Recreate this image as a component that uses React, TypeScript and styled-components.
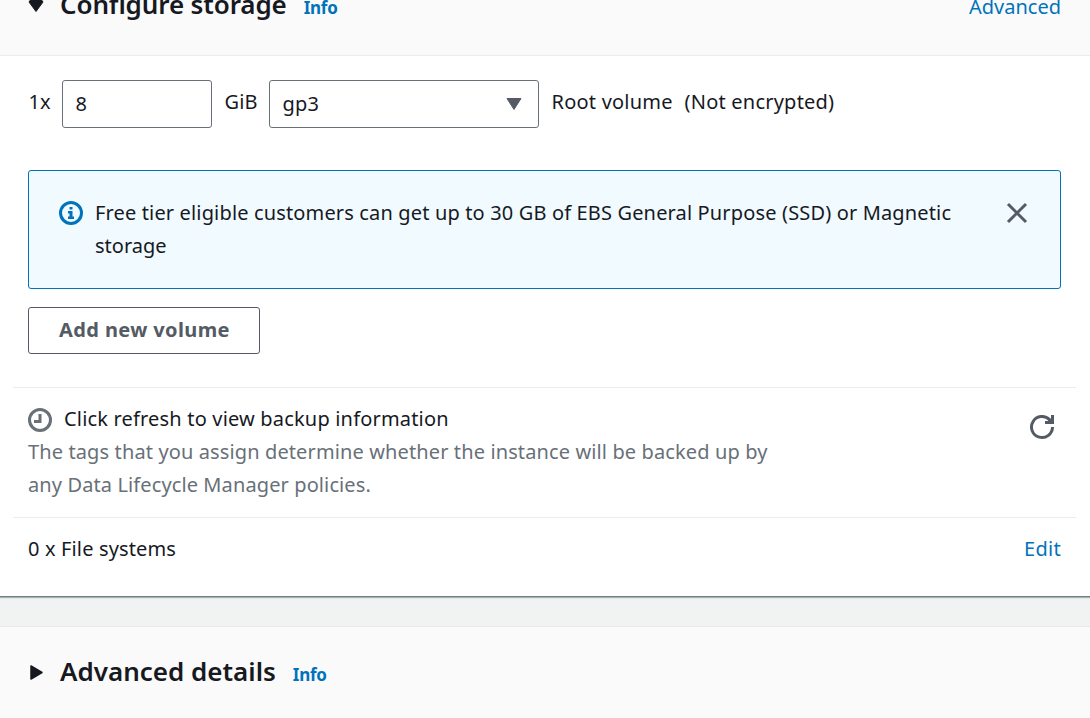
import React from "react";
import styled, { createGlobalStyle } from "styled-components";

const GlobalStyle = createGlobalStyle`
  *, *::before, *::after { box-sizing: border-box; }
  html, body { margin: 0; padding: 0; background: #f2f3f3; }
  body { overflow: hidden; }
`;

const Page = styled.main`
  height: 718px;
  overflow: hidden;
  display: flex;
  flex-direction: column;
  background: #f1f3f3;
  color: #16191f;
  font-family: "Noto Sans", "Open Sans", sans-serif;
  font-size: 20px;
  line-height: 33px;
  letter-spacing: 0.145px;
`;

const Panel = styled.section<{ $clipped?: boolean }>`
  flex: none;
  margin-top: ${(p) => (p.$clipped ? "-38px" : "0")};
  background: #fff;
  border-top: 1px solid #e6eaea;
  border-bottom: 1px solid #6f7f80;
  box-shadow: 0 1px 1px rgba(0, 28, 36, 0.3);
  & + & { margin-top: 29px; }
`;

const PanelHeader = styled.header<{ $raised?: boolean }>`
  height: 93px;
  padding: 0 29px ${(p) => (p.$raised ? 9 : 3)}px 28px;
  display: flex;
  align-items: center;
  background: #fafafa;
  border-bottom: 1px solid #eaeded;
`;

const Caret = styled.svg`
  flex: none;
  width: 16px;
  height: 18px;
  margin: 2px 16px 0 0;
`;

const Title = styled.h2<{ $spacing: number }>`
  margin: -2px 0 0;
  font-size: 26px;
  font-weight: 600;
  line-height: 36px;
  letter-spacing: ${(p) => p.$spacing}px;
`;

const InfoLink = styled.a`
  margin: 6px auto 0 17px;
  color: #0073bb;
  font-size: 17px;
  font-weight: 700;
  line-height: 24px;
  letter-spacing: -0.25px;
`;

const Text = styled.span<{ $spacing?: number }>`
  white-space: nowrap;
  letter-spacing: ${(p) => p.$spacing ?? 0.145}px;
`;

const Link = styled.a<{ $spacing?: number }>`
  color: #0073bb;
  letter-spacing: ${(p) => p.$spacing ?? 0}px;
`;

const HeaderLink = styled(Link)`
  margin-top: 4px;
`;

const Content = styled.div`
  padding: 24px 29px 33px 28px;
`;

const VolumeRow = styled.div`
  display: flex;
  height: 48px;
  align-items: center;
`;

const RowLabel = styled(Text)<{ $width: number; $indent: number }>`
  flex: none;
  width: ${(p) => p.$width}px;
  padding-left: ${(p) => p.$indent}px;
  margin-top: -6px;
`;

const Field = styled.div<{ $width: number }>`
  flex: none;
  width: ${(p) => p.$width}px;
  height: 48px;
  padding: 0 16px 0 12.5px;
  display: flex;
  align-items: center;
  justify-content: space-between;
  border: 1px solid #687078;
  border-radius: 3px;
  background: #fff;
`;

const FieldValue = styled(Text)`
  margin-top: -2px;
`;

const SelectArrow = styled.svg`
  display: block;
  width: 16px;
  height: 14px;
`;

const Alert = styled.div`
  height: 119px;
  margin-top: 42px;
  padding: 25px 31px 0 30px;
  display: flex;
  align-items: flex-start;
  border: 1px solid #0073bb;
  border-radius: 3px;
  background: #f1faff;
`;

const AlertText = styled.div`
  flex: 1;
  display: flex;
  flex-direction: column;
  margin-left: 12px;
`;

const Icon = styled.svg`
  flex: none;
  display: block;
  width: 24px;
  height: 24px;
  fill: none;
`;

const AlertIcon = styled(Icon)`
  margin-top: 5px;
`;

const AddButton = styled.button`
  display: block;
  width: 232px;
  height: 47px;
  margin-top: 18px;
  padding: 0 0 2px 1px;
  border: 1px solid #545b64;
  border-radius: 3px;
  background: #fff;
  color: #545b64;
  font: 700 20px/30px "Noto Sans", "Open Sans", sans-serif;
  letter-spacing: 0.38px;
`;

const Section = styled.div<{ $height: number }>`
  height: ${(p) => p.$height}px;
  margin: 0 14px 0 13px;
  padding: 14px 15px 0;
  display: flex;
  justify-content: space-between;
  align-items: flex-start;
  border-top: 1px solid #eaeded;
`;

const Lines = styled.div`
  display: flex;
  flex-direction: column;
  color: #687078;
`;

const BackupTitle = styled.div`
  display: flex;
  align-items: center;
  gap: 12px;
  color: #16191f;
`;

const ClockIcon = styled(Icon)`
  margin-top: 2px;
`;

const RefreshIcon = styled(Icon)`
  width: 26px;
  height: 27px;
  margin: 11px 6px 0 0;
`;

export default function App() {
  return (
    <>
      <GlobalStyle />
      <Page>
        <Panel $clipped>
          <PanelHeader $raised>
            <Caret viewBox="0 0 16 18">
              <path d="M3.5 1.5h9L15 5 8 14.5 1 5z" fill="#16191f" stroke="#16191f" strokeLinejoin="round" />
            </Caret>
            <Title $spacing={-0.12}>Configure storage</Title>
            <InfoLink>Info</InfoLink>
            <HeaderLink>Advanced</HeaderLink>
          </PanelHeader>
          <Content>
            <VolumeRow>
              <RowLabel $width={34} $indent={0.5}>1x</RowLabel>
              <Field $width={150}><FieldValue>8</FieldValue></Field>
              <RowLabel $width={57} $indent={12.5}>GiB</RowLabel>
              <Field $width={270}>
                <FieldValue>gp3</FieldValue>
                <SelectArrow viewBox="0 0 16 14">
                  <path d="M1 1.5h14L8 12.5z" fill="#545b64" stroke="#545b64" strokeLinejoin="round" />
                </SelectArrow>
              </Field>
              <RowLabel $width={133} $indent={12.5} $spacing={0.22}>Root volume</RowLabel>
              <RowLabel $width={162} $indent={12.5} $spacing={0.22}>(Not encrypted)</RowLabel>
            </VolumeRow>
            <Alert>
              <AlertIcon viewBox="0 0 24 24">
                <circle cx="12" cy="12" r="10.5" stroke="#0073bb" strokeWidth="3" />
                <path d="M10.5 6h3v2.6h-3zM9 10h4.5v5.6H15V18H9v-2.4h1.5v-3.2H9z" fill="#0073bb" />
              </AlertIcon>
              <AlertText>
                <Text $spacing={0.15}>Free tier eligible customers can get up to 30 GB of EBS General Purpose (SSD) or Magnetic</Text>
                <Text $spacing={0}>storage</Text>
              </AlertText>
              <AlertIcon viewBox="0 0 24 24">
                <path d="M3 3l18 18M21 3L3 21" stroke="#545b64" strokeWidth="3" />
              </AlertIcon>
            </Alert>
            <AddButton>Add new volume</AddButton>
          </Content>
          <Section $height={130}>
            <Lines>
              <BackupTitle>
                <ClockIcon viewBox="0 0 24 24">
                  <circle cx="12" cy="12" r="10.5" stroke="#687078" strokeWidth="3" />
                  <path d="M12 6v7.5H6" stroke="#687078" strokeWidth="3" />
                </ClockIcon>
                <Text $spacing={0.18}>Click refresh to view backup information</Text>
              </BackupTitle>
              <Text $spacing={0.12}>The tags that you assign determine whether the instance will be backed up by</Text>
              <Text $spacing={0.11}>any Data Lifecycle Manager policies.</Text>
            </Lines>
            <RefreshIcon viewBox="0 0 26 27">
              <path d="M23.5 14A10.5 10.5 0 1 1 20.6 6.8l2 2" stroke="#545b64" strokeWidth="3" />
              <path d="M23.5 2v7.5H16" stroke="#545b64" strokeWidth="3" />
              <path d="M19 6.5l3 -1v4h-3z" fill="#545b64" />
            </RefreshIcon>
          </Section>
          <Section $height={79}>
            <Text>0 x File systems</Text>
            <Link $spacing={0.3}>Edit</Link>
          </Section>
        </Panel>
        <Panel>
          <PanelHeader>
            <Caret viewBox="0 0 16 18">
              <path d="M3 2v13l11-6.5z" fill="#16191f" stroke="#16191f" strokeWidth="1.5" strokeLinejoin="round" />
            </Caret>
            <Title $spacing={0}>Advanced details</Title>
            <InfoLink>Info</InfoLink>
          </PanelHeader>
        </Panel>
      </Page>
    </>
  );
}
